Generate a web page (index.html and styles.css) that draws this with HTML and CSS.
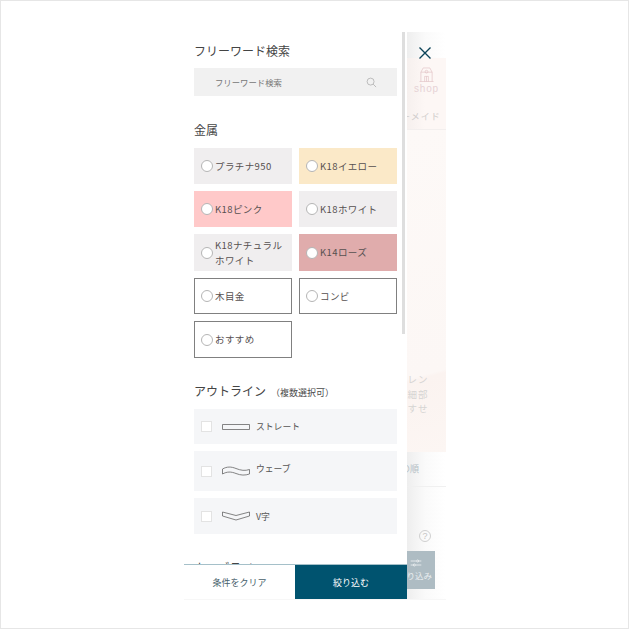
FILE: index.html
```html
<!DOCTYPE html>
<html lang="ja">
<head>
<meta charset="utf-8">
<title>フリーワード検索</title>
<link rel="stylesheet" href="styles.css">
</head>
<body>
<div class="frame">
  <div class="device">
    <div class="under">
      <div class="under-head">
        <svg class="shop-icon" viewBox="0 0 16 16" fill="none" stroke="#e0c0c4" stroke-width="0.7"><path d="M.5 15.500h15M2 15.500V5.500h12v10M2 5.500 4.500 1h7L14 5.500M6 15.500V10h4v5.500M8 10v5.500"/><circle cx="8" cy="5" r="1.500"/></svg>
        <span class="shop-label">shop</span>
        <span class="under-nav">ーメイド</span>
      </div>
      <div class="under-hero">
        <p class="hero-text">アレン<br>ど細部<br>おすせ</p>
      </div>
      <div class="under-tab">の順</div>
      <div class="under-help"><span class="help">?</span></div>
      <div class="under-filter">
        <svg class="filter-icon" viewBox="0 0 18 12" fill="none" stroke="#fff" stroke-width="1"><path d="M1 3h9M13 3h4M1 9h4M8 9h9"/><circle cx="11.500" cy="3" r="1.500"/><circle cx="6.500" cy="9" r="1.500"/></svg>
        <span>り込み</span>
      </div>
    </div>
    <button class="close" aria-label="閉じる">
      <svg viewBox="0 0 12 12" fill="none" stroke="#0b4358" stroke-width="1.400"><path d="M.5.500l11 11M11.500.500l-11 11"/></svg>
    </button>
    <aside class="panel">
      <div class="scroll">
        <h2 class="heading">フリーワード検索</h2>
        <div class="search">
          <span class="search-text">フリーワード検索</span>
          <svg class="search-icon" viewBox="0 0 12 12" fill="none" stroke="#a8a8a8" stroke-width="0.8"><circle cx="5" cy="5" r="3.800"/><path d="M7.800 7.800 11 11"/></svg>
        </div>

        <h2 class="heading metal-heading">金属</h2>
        <div class="metals">
          <label class="metal gray"><i class="radio"></i><span>プラチナ950</span></label>
          <label class="metal yellow"><i class="radio"></i><span>K18イエロー</span></label>
          <label class="metal pink"><i class="radio"></i><span>K18ピンク</span></label>
          <label class="metal gray"><i class="radio"></i><span>K18ホワイト</span></label>
          <label class="metal gray"><i class="radio"></i><span>K18ナチュラル<br>ホワイト</span></label>
          <label class="metal rose"><i class="radio"></i><span>K14ローズ</span></label>
          <label class="metal outlined"><i class="radio"></i><span>木目金</span></label>
          <label class="metal outlined"><i class="radio"></i><span>コンビ</span></label>
          <label class="metal outlined"><i class="radio"></i><span>おすすめ</span></label>
        </div>

        <h2 class="heading outline-heading">アウトライン<small>（複数選択可）</small></h2>
        <div class="outlines">
          <label class="outline straight"><i class="check"></i>
            <svg class="shape" viewBox="0 0 28 8" fill="none" stroke="#666" stroke-width="0.8"><path d="M.5 1.500h27v5H.5z"/></svg>
            <span>ストレート</span></label>
          <label class="outline wave"><i class="check"></i>
            <svg class="shape" viewBox="0 0 28 10" fill="none" stroke="#666" stroke-width="0.8"><path d="M.5 3C5 .5 9 .5 14 2.500S23 5 27.500 3.500V8C23 9.500 19 9.500 14 7.500S5 5.500.5 8z"/></svg>
            <span>ウェーブ</span></label>
          <label class="outline vshape"><i class="check"></i>
            <svg class="shape" viewBox="0 0 28 10" fill="none" stroke="#666" stroke-width="0.8"><path d="M.5 1 14 4.500 27.500 1v4L14 9 .5 5z"/></svg>
            <span>V字</span></label>
        </div>
        <h2 class="heading next-heading">カーブライン<small>（複数選択可）</small></h2>
      </div>
      <div class="scrollbar"></div>
      <div class="actions">
        <button class="clear">条件をクリア</button>
        <button class="apply">絞り込む</button>
      </div>
    </aside>
  </div>
</div>
</body>
</html>
```
FILE: styles.css
```css
* { box-sizing: border-box; }
html, body { margin: 0; padding: 0; background: #fff; }
body {
  width: 630px;
  height: 630px;
  font-family: "Noto Sans CJK JP", "Noto Sans", sans-serif;
  overflow: hidden;
}
.frame {
  width: 629px;
  height: 629px;
  border: 1px solid #e6e6e6;
  padding: 31px 0 0 183px;
}

.device {
  position: relative;
  width: 262px;
  height: 567px;
  background: #fff;
  overflow: hidden;
  box-shadow: 0 1px 0 #f7f7f7;
}

/* Page underneath the drawer, seen through a white veil */
.under {
  position: absolute;
  inset: 0 0 0 223px;
  display: flex;
  flex-direction: column;
  background: linear-gradient(90deg, #eeeeee 0, #fafafa 18px, #ffffff 38px);
}
.under-head {
  margin-top: 26px;
  height: 72px;
  display: flex;
  flex-direction: column;
  align-items: center;
  border-bottom: 1px solid #f3efee;
  background: linear-gradient(90deg, #f6f0ee, #fdf7f5 18px);
}
.shop-icon { width: 15px; height: 15px; margin-top: 9px; }
.shop-label { font: 10px/12px "Liberation Sans", sans-serif; letter-spacing: 0.8px; color: #e6d2d5; margin-top: 1px; }
.under-nav { font-size: 9px; line-height: 14px; color: #d0cdcc; letter-spacing: 1px; margin-top: 15px; white-space: nowrap; align-self: flex-start; margin-left: -6px; }
.under-hero {
  height: 322px;
  padding-top: 242px;
  overflow: hidden;
  background: linear-gradient(165deg, #fdf9f7 0, #fcf7f5 75%, #fbf3f0 76%, #fcf6f3 100%);
}
.hero-text { margin: 0 0 0 -10px; font-size: 9.500px; line-height: 14.500px; color: #d6d4d3; letter-spacing: 1px; white-space: nowrap; }
.under-tab {
  height: 35px;
  border-bottom: 1px solid #f0f0f0;
  font-size: 9px;
  line-height: 34px;
  color: #b4bfc5;
  text-indent: -6px;
}
.under-help { height: 64px; padding: 43px 0 0 12px; }
.help {
  display: block;
  width: 12px;
  height: 12px;
  border: 1px solid #d0d0d0;
  border-radius: 50%;
  font: 9px/10px "Liberation Sans", sans-serif;
  color: #c4c4c4;
  text-align: center;
}
.under-filter {
  width: 28px;
  height: 38px;
  background: #aebcc3;
  color: #e9eef0;
  font-size: 8.500px;
  line-height: 11px;
  display: flex;
  flex-direction: column;
  align-items: flex-end;
  padding-top: 8px;
  white-space: nowrap;
}
.filter-icon { width: 12px; height: 8px; margin: 0 13px 3px 0; }
.under-filter span { margin-right: 3px; }

.close {
  position: absolute;
  left: 235px;
  top: 15px;
  width: 12px;
  height: 12px;
  padding: 0;
  border: 0;
  background: none;
  display: block;
}
.close svg { display: block; width: 12px; height: 12px; overflow: visible; }

/* Drawer */
.panel {
  position: absolute;
  inset: 0 39px 0 0;
  background: #fff;
  overflow: hidden;
}
.scroll {
  position: absolute;
  inset: 0 0 35px 0;
  padding: 0 10px;
  overflow: hidden;
}
.scrollbar {
  position: absolute;
  left: 218px;
  top: 0;
  width: 3px;
  height: 302px;
  background: #dedede;
}
.heading {
  margin: 0;
  font-size: 12px;
  font-weight: 400;
  line-height: 18px;
  color: #444;
  padding-top: 10px;
  height: 36px;
  white-space: nowrap;
}
.search {
  height: 28px;
  background: #f1f1f1;
  display: flex;
  align-items: center;
  justify-content: space-between;
  padding: 0 20px 0 21px;
}
.search-text { font-size: 8.400px; color: #777; }
.search-icon { width: 11px; height: 11px; }

.metal-heading { margin-top: 25px; height: 27px; padding-top: 0; }
.metals {
  display: grid;
  grid-template-columns: 98px 98px;
  grid-template-rows: 36px 36px 37px 36px 37px;
  gap: 7px;
}
.metal {
  display: flex;
  align-items: center;
  padding-left: 7px;
  gap: 2px;
  font-size: 9.500px;
  line-height: 14.500px;
  letter-spacing: 0.4px;
  color: #565050;
}
.gray { background: #f0eeef; }
.yellow { background: #fbe9c8; }
.pink { background: #ffc9c9; }
.rose { background: #e0acac; }
.outlined { background: #fff; border: 1px solid #808080; padding-left: 6px; }
.radio {
  flex: none;
  width: 12px;
  height: 12px;
  border-radius: 50%;
  background: #fff;
  border: 1px solid #b5b5b5;
}

.outline-heading { margin-top: 24px; height: 27px; padding-top: 0; }
.heading small { font-size: 9px; margin-left: 5px; color: #4a4a4a; }
.outlines { display: flex; flex-direction: column; gap: 7px; }
.outline {
  background: #f5f6f8;
  display: flex;
  align-items: center;
  padding-left: 7px;
  font-size: 8.800px;
  color: #555;
}
.straight { height: 35px; }
.wave { height: 40px; }
.vshape { height: 36px; }
.wave span { margin-bottom: 5px; }
.check {
  flex: none;
  width: 11px;
  height: 11px;
  background: #fff;
  border: 1px solid #e3e3e3;
  margin-right: 10px;
}
.shape { width: 28px; height: 10px; margin-right: 6px; }
.next-heading { margin-top: 25px; padding-top: 0; }

.actions {
  position: absolute;
  left: 0;
  right: 0;
  bottom: 0;
  height: 35px;
  display: flex;
  background: #fff;
  border-top: 1px solid #a5c0c9;
}
.actions button {
  border: 0;
  padding: 0;
  font-family: inherit;
  font-size: 9px;
}
.clear { width: 111px; background: #fff; color: #47606b; }
.apply { flex: 1; background: #00536f; color: #fff; }
```
